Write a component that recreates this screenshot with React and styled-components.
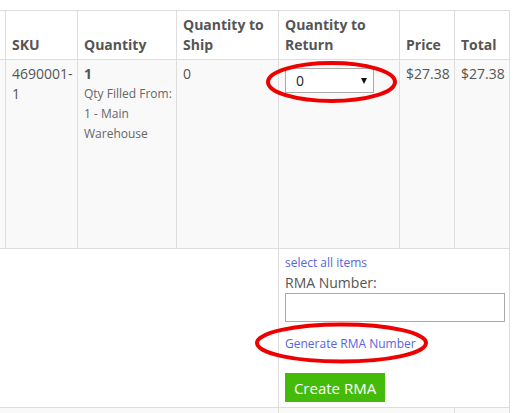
import React from "react";
import styled, { createGlobalStyle } from "styled-components";

const Global = createGlobalStyle`
  body {
    margin: 0;
    background: #fff;
    font-family: "Open Sans", "Liberation Sans", sans-serif;
  }
`;

const Page = styled.div`
  position: relative;
  width: 515px;
  height: 413px;
  overflow: hidden;
  padding-top: 10px;
  box-sizing: border-box;
`;

const Table = styled.table`
  border-collapse: collapse;
  table-layout: fixed;
  width: 545px;
  margin-left: -35px;
`;

const Th = styled.th`
  border: 1px solid #ddd;
  padding: 4px 6px;
  vertical-align: bottom;
  text-align: left;
  font-size: 14px;
  font-weight: 700;
  line-height: 20px;
  color: #555;
`;

const Td = styled.td`
  border: 1px solid #ddd;
  padding: 4px 6px;
  vertical-align: top;
  font-size: 14px;
  line-height: 20px;
  color: #555;
`;

const Row = styled.tr`
  background: ${(p) => (p.$striped ? "#f9f9f9" : "#fff")};
  height: ${(p) => p.$h}px;
`;

const Small = styled.div`
  font-size: 12px;
  color: #666;
  white-space: ${(p) => (p.$nowrap ? "nowrap" : "normal")};
`;

const SelectBox = styled.div`
  position: relative;
  width: 89px;
  height: 25px;
  margin-top: 4px;
  box-sizing: border-box;
  border: 1px solid #a9a9a9;
  background: #fff;
  select {
    appearance: none;
    width: 100%;
    height: 100%;
    border: none;
    background: transparent;
    padding: 0 0 0 10px;
    font-family: inherit;
    font-size: 14px;
    color: #222;
    outline: none;
  }
`;

const Arrow = styled.span`
  position: absolute;
  right: 6px;
  top: 9px;
  width: 0;
  height: 0;
  border-left: 3.5px solid transparent;
  border-right: 3.5px solid transparent;
  border-top: 6px solid #111;
  pointer-events: none;
`;

const Link = styled.a`
  display: block;
  color: #5a63e0;
  font-size: ${(p) => p.$size || 12}px;
  line-height: 20px;
  text-decoration: none;
  margin-top: ${(p) => p.$mt || 0}px;
`;

const Label = styled.div`
  font-size: 14px;
  line-height: 20px;
  color: #555;
`;

const TextInput = styled.input`
  display: block;
  width: 220px;
  height: 29px;
  box-sizing: border-box;
  border: 1px solid #aaa;
  margin: 0;
`;

const Button = styled.button`
  display: block;
  margin-top: 19px;
  width: 100px;
  height: 29px;
  border: none;
  background: #44bb0a;
  color: #fff;
  font-family: inherit;
  font-size: 15px;
  padding: 0;
`;

const Marks = styled.svg`
  position: absolute;
  left: 0;
  top: 0;
  pointer-events: none;
`;

export default function App() {
  return (
    <Page>
      <Global />
      <Table>
        <colgroup>
          <col style={{ width: 40 }} />
          <col style={{ width: 72 }} />
          <col style={{ width: 99 }} />
          <col style={{ width: 102 }} />
          <col style={{ width: 121 }} />
          <col style={{ width: 55 }} />
          <col style={{ width: 55 }} />
        </colgroup>
        <thead>
          <Row $h={49}>
            <Th></Th>
            <Th>SKU</Th>
            <Th>Quantity</Th>
            <Th>Quantity to Ship</Th>
            <Th>Quantity to Return</Th>
            <Th>Price</Th>
            <Th>Total</Th>
          </Row>
        </thead>
        <tbody>
          <Row $striped $h={189}>
            <Td></Td>
            <Td>4690001-1</Td>
            <Td>
              <b>1</b>
              <Small $nowrap>Qty Filled From:</Small>
              <Small>1 - Main Warehouse</Small>
            </Td>
            <Td>0</Td>
            <Td>
              <SelectBox>
                <select defaultValue="0">
                  <option value="0">0</option>
                  <option value="1">1</option>
                </select>
                <Arrow />
              </SelectBox>
            </Td>
            <Td>$27.38</Td>
            <Td>$27.38</Td>
          </Row>
          <Row $h={159}>
            <Td colSpan={4}></Td>
            <Td colSpan={3}>
              <Link href="#">select all items</Link>
              <Label>RMA Number:</Label>
              <TextInput type="text" />
              <Link href="#" $mt={12}>Generate RMA Number</Link>
              <Button>Create RMA</Button>
            </Td>
          </Row>
          <Row $striped $h={30}>
            <Td colSpan={4}></Td>
            <Td colSpan={2}></Td>
            <Td></Td>
          </Row>
        </tbody>
      </Table>
      <Marks width="515" height="413" viewBox="0 0 515 413">
        <ellipse cx="331.5" cy="82" rx="63.5" ry="19" fill="none" stroke="#ee0000" strokeWidth="4" />
        <ellipse cx="341.5" cy="343" rx="84.5" ry="18.5" fill="none" stroke="#ee0000" strokeWidth="4" />
      </Marks>
    </Page>
  );
}
